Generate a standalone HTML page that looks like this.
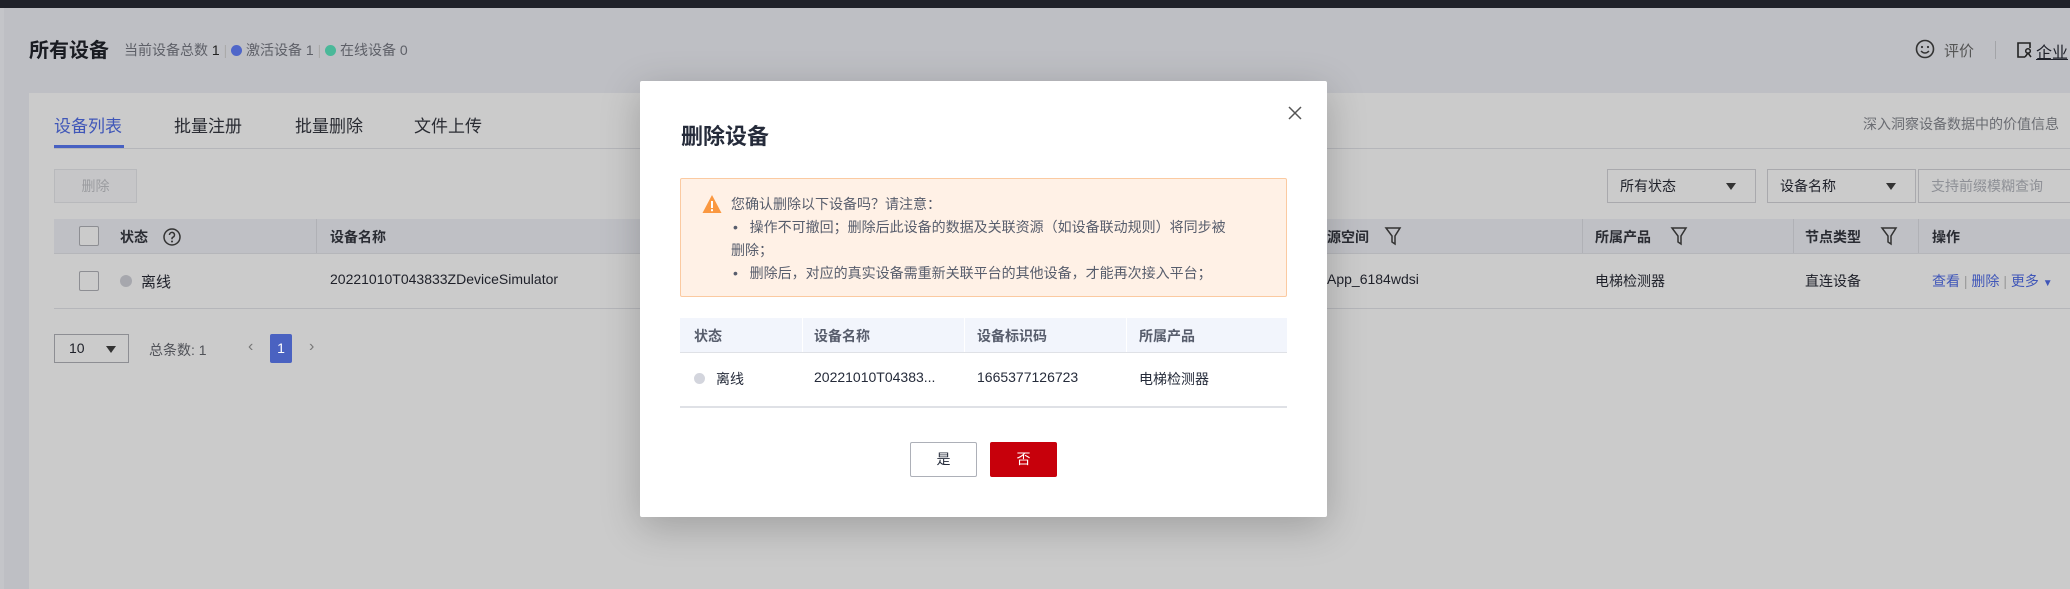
<!DOCTYPE html>
<html><head><meta charset="utf-8">
<style>
*{margin:0;padding:0;box-sizing:border-box}
body{width:2070px;height:589px;overflow:hidden;position:relative;background:#bebfc4;font-family:"Liberation Sans","Noto Sans CJK SC",sans-serif;color:#1e2029}
.a{position:absolute;white-space:nowrap}
.topbar{left:0;top:0;width:2070px;height:8px;background:#1f2129}
.card{left:29px;top:93px;width:2041px;height:496px;background:#cbcbcb}
.hline{height:1px;background:#b5b6ba}
.th{font-size:14px;font-weight:bold;color:#2a2c33}
.td{font-size:14px;color:#1e2029}
.sel{border:1px solid #a9a9ad;background:#cbcbcb;font-size:14px;padding:0 12px;line-height:32px}
.tri{width:0;height:0;border-left:5px solid transparent;border-right:5px solid transparent;border-top:7px solid #333}
.modal{left:640px;top:81px;width:687px;height:436px;background:#fff;border-radius:2px;box-shadow:0 10px 40px rgba(0,0,0,0.22)}
.m{color:#575d6c;font-size:14px}
</style></head><body>
<div class="a topbar"></div>
<div class="a" style="left:0;top:8px;width:4px;height:581px;background:#c4c5c9"></div>
<div class="a" style="left:29px;top:34px;font-size:20px;font-weight:bold;color:#1a1c22">所有设备</div>
<div class="a" style="left:124px;top:40px;font-size:14px;color:#5e6068">当前设备总数 <span style="color:#222">1</span> <span style="color:#aaa">|</span> <span style="display:inline-block;width:11px;height:11px;border-radius:50%;background:#4f66c9;vertical-align:-1px"></span> 激活设备 1 <span style="color:#aaa">|</span> <span style="display:inline-block;width:11px;height:11px;border-radius:50%;background:#4ab899;vertical-align:-1px"></span> 在线设备 0</div>
<svg class="a" style="left:1915px;top:39px" width="20" height="20" viewBox="0 0 20 20"><circle cx="10" cy="10" r="8.5" fill="none" stroke="#333" stroke-width="1.6"/><circle cx="7" cy="8" r="1.1" fill="#333"/><circle cx="13" cy="8" r="1.1" fill="#333"/><path d="M6 12 Q10 16 14 12" fill="none" stroke="#333" stroke-width="1.5"/></svg>
<div class="a" style="left:1944px;top:40px;font-size:15px;color:#555">评价</div>
<div class="a" style="left:1995px;top:41px;width:1px;height:18px;background:#a3a4a8"></div>
<svg class="a" style="left:2017px;top:42px" width="16" height="16" viewBox="0 0 16 16"><path d="M8 1H1v14h7M1 1h12v5" fill="none" stroke="#222" stroke-width="1.6"/><circle cx="11" cy="9" r="2.3" fill="none" stroke="#222" stroke-width="1.5"/><path d="M8 15l3-4 3 4" fill="none" stroke="#222" stroke-width="1.5"/></svg>
<div class="a" style="left:2036px;top:39px;font-size:16px;color:#1e2029;text-decoration:underline">企业</div>

<div class="a card"></div>
<div class="a" style="left:54px;top:112px;font-size:17px;color:#3f56b8">设备列表</div>
<div class="a" style="left:174px;top:112px;font-size:17px;color:#2a2c33">批量注册</div>
<div class="a" style="left:295px;top:112px;font-size:17px;color:#2a2c33">批量删除</div>
<div class="a" style="left:414px;top:112px;font-size:17px;color:#2a2c33">文件上传</div>
<div class="a" style="left:1863px;top:114px;font-size:14px;color:#6a6c72">深入洞察设备数据中的价值信息</div>
<div class="a hline" style="left:54px;top:148px;width:2016px"></div>
<div class="a" style="left:54px;top:145px;width:70px;height:3px;background:#4760c2"></div>

<div class="a" style="left:54px;top:169px;width:83px;height:34px;border:1px solid #b8b9bc;background:#c6c6c8;font-size:14px;color:#9b9ca0;text-align:center;line-height:32px">删除</div>
<div class="a sel" style="left:1607px;top:169px;width:149px">所有状态</div><div class="a tri" style="left:1726px;top:183px"></div>
<div class="a sel" style="left:1767px;top:169px;width:149px">设备名称</div><div class="a tri" style="left:1886px;top:183px"></div>
<div class="a sel" style="left:1918px;top:169px;width:160px;color:#8e9096">支持前缀模糊查询</div>

<div class="a" style="left:54px;top:219px;width:2016px;height:34px;background:#bfc0c5"></div>
<div class="a hline" style="left:54px;top:253px;width:2016px"></div>
<div class="a" style="left:316px;top:219px;width:1px;height:34px;background:#b0b1b6"></div>
<div class="a" style="left:1582px;top:219px;width:1px;height:34px;background:#b0b1b6"></div>
<div class="a" style="left:1793px;top:219px;width:1px;height:34px;background:#b0b1b6"></div>
<div class="a" style="left:1918px;top:219px;width:1px;height:34px;background:#b0b1b6"></div>
<div class="a" style="left:79px;top:226px;width:20px;height:20px;border:1px solid #8d8e93;background:#cbcbcb;border-radius:2px"></div>
<div class="a th" style="left:120px;top:227px">状态</div>
<svg class="a" style="left:163px;top:228px" width="18" height="18" viewBox="0 0 18 18"><circle cx="9" cy="9" r="8" fill="none" stroke="#333" stroke-width="1.5"/><path d="M6.5 7a2.5 2.5 0 1 1 3.5 2.2c-.7.3-1 .8-1 1.5v.6" fill="none" stroke="#333" stroke-width="1.5"/><circle cx="9" cy="13.5" r="1" fill="#333"/></svg>
<div class="a th" style="left:330px;top:227px">设备名称</div>
<div class="a th" style="left:1327px;top:227px">源空间</div>
<div class="a th" style="left:1595px;top:227px">所属产品</div>
<div class="a th" style="left:1805px;top:227px">节点类型</div>
<div class="a th" style="left:1932px;top:227px">操作</div>
<svg class="a" style="left:1384px;top:226px" width="18" height="20" viewBox="0 0 18 20"><path d="M2 2h14l-5 8v8l-3-2V10z" fill="none" stroke="#333" stroke-width="1.5"/></svg>
<svg class="a" style="left:1670px;top:226px" width="18" height="20" viewBox="0 0 18 20"><path d="M2 2h14l-5 8v8l-3-2V10z" fill="none" stroke="#333" stroke-width="1.5"/></svg>
<svg class="a" style="left:1880px;top:226px" width="18" height="20" viewBox="0 0 18 20"><path d="M2 2h14l-5 8v8l-3-2V10z" fill="none" stroke="#333" stroke-width="1.5"/></svg>

<div class="a" style="left:79px;top:271px;width:20px;height:20px;border:1px solid #8d8e93;background:#cbcbcb;border-radius:2px"></div>
<div class="a" style="left:120px;top:275px;width:12px;height:12px;border-radius:50%;background:#a6a7ad"></div>
<div class="a td" style="left:141px;top:271px;font-size:15px">离线</div>
<div class="a td" style="left:330px;top:271px">20221010T043833ZDeviceSimulator</div>
<div class="a td" style="left:1327px;top:271px">App_6184wdsi</div>
<div class="a td" style="left:1595px;top:271px">电梯检测器</div>
<div class="a td" style="left:1805px;top:271px">直连设备</div>
<div class="a td" style="left:1932px;top:271px;color:#3f56b8">查看 <span style="color:#999">|</span> 删除 <span style="color:#999">|</span> 更多 <span style="font-size:10px">▼</span></div>
<div class="a hline" style="left:54px;top:308px;width:2016px"></div>

<div class="a" style="left:54px;top:334px;width:75px;height:29px;border:1px solid #8d8e93;font-size:14px;line-height:27px;padding-left:14px">10</div><div class="a tri" style="left:106px;top:346px"></div>
<div class="a" style="left:149px;top:340px;font-size:14px;color:#505258">总条数: 1</div>
<div class="a" style="left:248px;top:338px;font-size:16px;color:#777">‹</div>
<div class="a" style="left:270px;top:334px;width:22px;height:29px;background:#4a62c1;color:#fff;font-size:14px;text-align:center;line-height:29px;border-radius:2px">1</div>
<div class="a" style="left:309px;top:338px;font-size:16px;color:#777">›</div>

<div class="a modal"></div>
<svg class="a" style="left:1287px;top:105px" width="16" height="16" viewBox="0 0 16 16"><path d="M2 2l12 12M14 2L2 14" stroke="#555" stroke-width="1.5"/></svg>
<div class="a" style="left:681px;top:119px;font-size:22px;font-weight:bold;color:#252b3a">删除设备</div>
<div class="a" style="left:680px;top:178px;width:607px;height:119px;background:#fff1e6;border:1px solid #fbcaa1;border-radius:2px"></div>
<svg class="a" style="left:702px;top:194px" width="20" height="20" viewBox="0 0 20 20"><path d="M10 1L19.5 19H.5z" fill="#fa9841"/><rect x="9" y="7" width="2" height="7" fill="#fff"/><rect x="9" y="15.2" width="2" height="2" fill="#fff"/></svg>
<div class="a m" style="left:731px;top:194px">您确认删除以下设备吗？请注意：</div>
<div class="a m" style="left:733px;top:217px">•&nbsp;&nbsp;&nbsp;操作不可撤回；删除后此设备的数据及关联资源（如设备联动规则）将同步被</div>
<div class="a m" style="left:731px;top:240px">删除；</div>
<div class="a m" style="left:733px;top:263px">•&nbsp;&nbsp;&nbsp;删除后，对应的真实设备需重新关联平台的其他设备，才能再次接入平台；</div>

<div class="a" style="left:680px;top:318px;width:607px;height:34px;background:#f2f5fc"></div>
<div class="a" style="left:802px;top:318px;width:1px;height:34px;background:#fff"></div>
<div class="a" style="left:964px;top:318px;width:1px;height:34px;background:#fff"></div>
<div class="a" style="left:1126px;top:318px;width:1px;height:34px;background:#fff"></div>
<div class="a" style="left:680px;top:352px;width:607px;height:1px;background:#dfe1e6"></div>
<div class="a m" style="left:694px;top:326px;font-weight:bold;color:#575d6c">状态</div>
<div class="a m" style="left:814px;top:326px;font-weight:bold">设备名称</div>
<div class="a m" style="left:977px;top:326px;font-weight:bold">设备标识码</div>
<div class="a m" style="left:1139px;top:326px;font-weight:bold">所属产品</div>
<div class="a" style="left:694px;top:373px;width:11px;height:11px;border-radius:50%;background:#d3d5dd"></div>
<div class="a" style="left:716px;top:369px;font-size:14px;color:#252b3a">离线</div>
<div class="a" style="left:814px;top:369px;font-size:14px;color:#252b3a">20221010T04383...</div>
<div class="a" style="left:977px;top:369px;font-size:14px;color:#252b3a">1665377126723</div>
<div class="a" style="left:1139px;top:369px;font-size:14px;color:#252b3a">电梯检测器</div>
<div class="a" style="left:680px;top:406px;width:607px;height:2px;background:#dfe1e6"></div>

<div class="a" style="left:910px;top:442px;width:67px;height:35px;border:1px solid #adb0b8;border-radius:2px;font-size:14px;color:#252b3a;text-align:center;line-height:33px">是</div>
<div class="a" style="left:990px;top:442px;width:67px;height:35px;background:#c7000b;border-radius:2px;font-size:14px;color:#fff;text-align:center;line-height:35px">否</div>
</body></html>
